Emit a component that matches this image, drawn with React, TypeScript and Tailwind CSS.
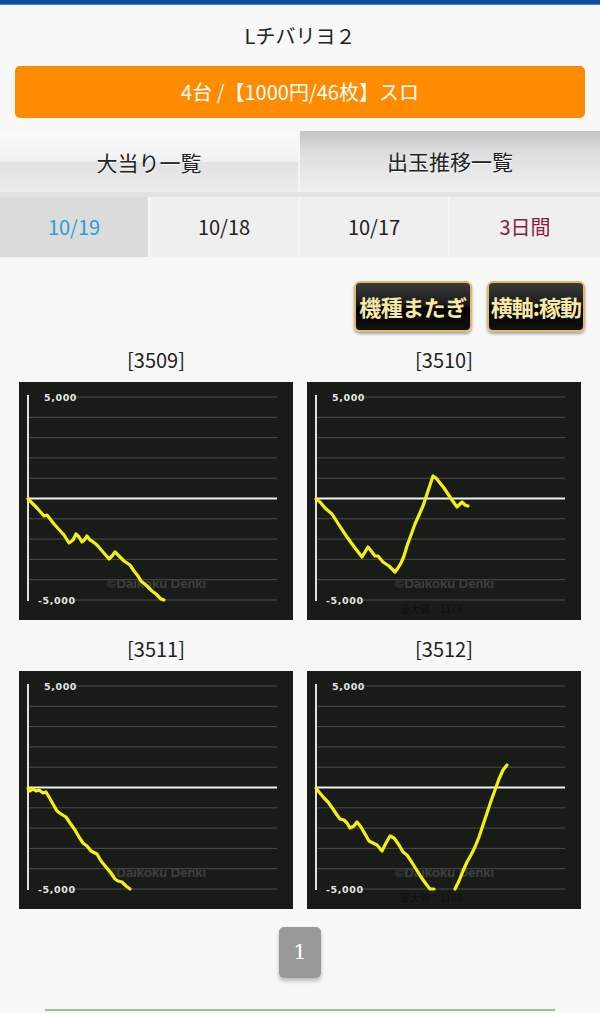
import React from "react";

type Pt = [number, number];

const charts: { id: string; lines: Pt[][]; max?: string }[] = [
  {
    id: "3509",
    lines: [
      [[9,117],[12,120],[18,126],[25,134],[28,133],[35,142],[45,153],[50,161],[54,158],[57,152],[60,155],[63,160],[66,157],[68,154],[71,158],[73,159],[78,163],[84,170],[90,177],[93,174],[96,170],[101,175],[105,179],[111,183],[115,189],[119,194],[122,199],[128,204],[133,209],[137,212],[142,217],[145,218]],
    ],
  },
  {
    id: "3510",
    max: "最大値：1177",
    lines: [
      [[9,117],[13,120],[18,126],[25,132],[32,143],[40,155],[48,166],[55,175],[58,170],[61,165],[65,170],[68,174],[71,174],[76,180],[82,184],[88,190],[91,186],[94,181],[97,174],[100,164],[104,153],[108,142],[112,133],[116,124],[119,115],[122,106],[126,94],[129,96],[133,101],[137,106],[141,112],[145,118],[150,125],[153,122],[155,120],[158,123],[161,124]],
    ],
  },
  {
    id: "3511",
    lines: [
      [[9,117],[11,120],[14,118],[17,120],[20,119],[24,122],[27,121],[30,126],[34,133],[38,140],[42,143],[47,146],[51,152],[56,159],[60,166],[64,172],[68,175],[72,180],[78,183],[82,190],[87,196],[92,202],[96,208],[99,210],[103,211],[107,215],[111,218]],
    ],
  },
  {
    id: "3512",
    max: "最大値：1165",
    lines: [
      [[9,117],[12,121],[17,127],[21,131],[26,138],[30,144],[33,148],[37,149],[40,152],[43,157],[47,155],[50,151],[54,156],[58,163],[62,170],[66,172],[70,174],[75,180],[79,172],[83,165],[87,167],[92,174],[96,181],[100,184],[104,190],[109,198],[114,206],[119,213],[123,218],[127,218]],
      [[148,218],[152,210],[156,200],[160,191],[164,184],[168,176],[172,166],[176,154],[180,142],[184,130],[188,119],[192,108],[196,99],[200,94]],
    ],
  },
];

function Chart({ lines, max }: { lines: Pt[][]; max?: string }) {
  const ys = Array.from({ length: 11 }, (_, i) => 15 + i * 20.3);
  return (
    <svg width="274" height="238" viewBox="0 0 274 238" className="block">
      <rect x="0" y="0" width="274" height="238" fill="#191b19" />
      {ys.map((y, i) =>
        i === 5 ? null : (
          <line
            key={i}
            x1={i === 0 || i === 10 ? 53 : 9}
            x2={258}
            y1={y}
            y2={y}
            stroke="#4b4d4b"
            strokeWidth="1"
          />
        )
      )}
      <line x1="9" x2="9" y1="13" y2="219" stroke="#e0e0e0" strokeWidth="2" />
      <line x1="9" x2="258" y1="116.5" y2="116.5" stroke="#f2f2f2" strokeWidth="2" />
      <text x="25" y="18.5" fill="#e6e6e6" fontSize="9.5" fontWeight="bold" fontFamily="'DejaVu Sans', sans-serif" letterSpacing="0.6">5,000</text>
      <text x="19" y="221.5" fill="#e6e6e6" fontSize="9.5" fontWeight="bold" fontFamily="'DejaVu Sans', sans-serif" letterSpacing="0.6">-5,000</text>
      <text x="88" y="206" fill="#3e403e" fontSize="13" fontWeight="bold" fontFamily="'Liberation Sans', sans-serif">©Daikoku Denki</text>
      {max && (
        <text x="93" y="231" fill="#0e0e0e" fontSize="10" fontFamily="'Noto Sans CJK JP', sans-serif">{max}</text>
      )}
      {lines.map((l, i) => (
        <polyline
          key={i}
          points={l.map((p) => p.join(",")).join(" ")}
          fill="none"
          stroke="#f2f20a"
          strokeWidth="3.2"
          strokeLinejoin="round"
          strokeLinecap="round"
        />
      ))}
    </svg>
  );
}

export default function App() {
  return (
    <div
      className="w-[600px] min-h-[1013px] bg-[#f8f8f8] text-[#222] overflow-hidden"
      style={{ fontFamily: "'Noto Sans CJK JP', 'Noto Sans', sans-serif" }}
    >
      <div className="h-[5px] bg-[#0c4d9e] border-b border-[#4d7fbf]" />
      <div className="h-[61px] flex items-center justify-center text-[20px] text-[#222]">
        Lチバリヨ２
      </div>
      <div className="mx-[15px] h-[52px] rounded-[5px] bg-[#ff8c00] flex items-center justify-center text-white text-[20px]">
        4台 /【1000円/46枚】スロ
      </div>

      <div className="mt-[13px] grid grid-cols-2 h-[61px] items-end">
        <div className="h-[59px] flex items-center justify-center text-[21px] text-[#222] bg-[linear-gradient(#fbfbfb_0%,#f1f1f1_48%,#e2e2e2_50%,#ececec_100%)] [text-shadow:0_1px_0_#fff] border-r-2 border-[#f6f6f6]">
          大当り一覧
        </div>
        <div className="h-[61px] flex items-center justify-center text-[21px] text-[#222] bg-[linear-gradient(#c6c6c6_0%,#e0e0e0_40%,#f0f0f0_100%)] [text-shadow:0_1px_0_#fff]">
          出玉推移一覧
        </div>
      </div>
      <div className="h-[5px] bg-[#e2e2e2]" />
      <div className="grid grid-cols-4 h-[62px] bg-[#efefef] border-b-2 border-[#f6f6f6] text-[20px]">
        <div className="flex items-center justify-center bg-[#dcdcdc] text-[#2a9fd6] border-r-2 border-[#f6f6f6]">10/19</div>
        <div className="flex items-center justify-center text-[#222] border-r-2 border-[#f6f6f6]">10/18</div>
        <div className="flex items-center justify-center text-[#222] border-r-2 border-[#f6f6f6]">10/17</div>
        <div className="flex items-center justify-center text-[#8a1c3e]">3日間</div>
      </div>

      <div className="mt-[22px] flex justify-end gap-[15px] pr-[15px]">
        <div className="h-[51px] px-[3px] flex items-center rounded-[6px] border-2 border-[#dcbc5c] bg-[linear-gradient(#3a3a3a_0%,#1c1c1c_45%,#000_55%,#111_100%)] shadow-[0_2px_3px_rgba(0,0,0,0.35)] text-[#f7e8a6] text-[22px] font-bold tracking-[-0.5px]">
          機種またぎ
        </div>
        <div className="h-[51px] px-[2px] flex items-center rounded-[6px] border-2 border-[#dcbc5c] bg-[linear-gradient(#3a3a3a_0%,#1c1c1c_45%,#000_55%,#111_100%)] shadow-[0_2px_3px_rgba(0,0,0,0.35)] text-[#f7e8a6] text-[22px] font-bold tracking-[-1px]">
          横軸:稼動
        </div>
      </div>

      <div className="mt-[6px] grid grid-cols-[274px_274px] gap-x-[14px] gap-y-[7px] pl-[19px]">
        {charts.map((c) => (
          <div key={c.id} className="flex flex-col">
            <div className="h-[44px] flex items-center justify-center text-[20px] text-[#222]">
              [{c.id}]
            </div>
            <Chart lines={c.lines} max={c.max} />
          </div>
        ))}
      </div>

      <div className="mt-[18px] flex justify-center">
        <div className="w-[42px] h-[51px] rounded-[5px] bg-[#999999] text-white text-[21px] flex items-center justify-center shadow-[0_3px_4px_rgba(0,0,0,0.25)]" style={{ fontFamily: "'DejaVu Serif', serif" }}>
          1
        </div>
      </div>

      <div className="mt-[31px] mx-[45px] h-[20px] border-t-2 border-[#8dc88d] bg-[#f4f9f4]" />
    </div>
  );
}
